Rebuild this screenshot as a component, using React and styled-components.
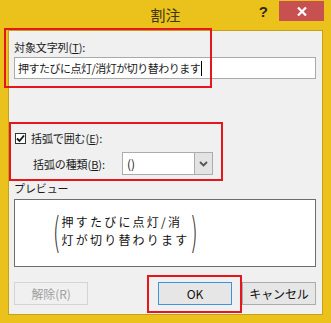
import styled, { createGlobalStyle } from "styled-components";

const GlobalStyle = createGlobalStyle`
  html, body { margin: 0; padding: 0; background: #fff; }
  body { font-family: "Noto Sans CJK JP", "Noto Sans", sans-serif; }
`;

const Frame = styled.div`
  position: relative;
  width: 331px;
  height: 323px;
  background: #ebc21b;
  display: flex;
  flex-direction: column;
  box-sizing: border-box;
`;

const TitleBar = styled.div`
  height: 30px;
  display: grid;
  grid-template-columns: 1fr auto 1fr;
`;

const Title = styled.div`
  font-size: 15px;
  line-height: 30px;
  color: #3b3415;
`;

const Controls = styled.div`
  display: flex;
  justify-content: flex-end;
  align-items: flex-start;
  padding-right: 7px;
`;

const Help = styled.span`
  font-family: "Liberation Sans", sans-serif;
  font-weight: 700;
  font-size: 15px;
  line-height: 15px;
  margin-top: 4px;
  margin-right: 11px;
  color: #2d2a1a;
`;

const Close = styled.div`
  width: 45px;
  height: 20px;
  margin-top: 1px;
  background: #c75050;
  display: flex;
  align-items: center;
  justify-content: center;
`;

const Client = styled.div`
  margin: 0 8px 8px;
  height: 285px;
  box-sizing: border-box;
  border: 1px solid #c4a118;
  background: #f0f0f0;
  padding: 8px 6px 0 5px;
  display: flex;
  flex-direction: column;
  font-size: 11px;
  letter-spacing: -0.1px;
  color: #1a1a1a;
`;

const Label = styled.div`
  line-height: 16px;
  height: 16px;
  white-space: nowrap;
  margin-top: ${(p) => p.$top || 0}px;
  u { text-decoration: underline; }
`;

const TextBox = styled.div`
  margin-top: 2px;
  height: 22px;
  box-sizing: border-box;
  border: 1px solid #a9a9a9;
  background: #fff;
  padding-left: 3px;
  line-height: 20px;
  font-size: 11px;
  letter-spacing: -0.5px;
  white-space: nowrap;
  display: flex;
  align-items: center;
`;

const Caret = styled.span`
  display: inline-block;
  width: 1px;
  height: 15px;
  background: #000;
  margin-left: 1px;
`;

const CheckRow = styled.div`
  margin-top: 51px;
  height: 16px;
  display: flex;
  align-items: center;
  gap: 5px;
  padding-left: 1px;
  line-height: 16px;
`;

const Box = styled.span`
  width: 11px;
  height: 11px;
  box-sizing: border-box;
  border: 1px solid #333;
  background: #fff;
  display: flex;
  align-items: center;
  justify-content: center;
`;

const ComboRow = styled.div`
  margin-top: 6px;
  display: flex;
  align-items: center;
  padding-left: 19px;
`;

const ComboLabel = styled.span`
  width: 89px;
  white-space: nowrap;
  line-height: 16px;
`;

const Combo = styled.div`
  width: 91px;
  height: 23px;
  box-sizing: border-box;
  border: 1px solid #acacac;
  background: #fff;
  display: flex;
`;

const ComboValue = styled.span`
  flex: 1;
  padding-left: 4px;
  line-height: 21px;
  font-size: 12px;
`;

const DropButton = styled.span`
  width: 17px;
  background: #e3e3e3;
  border-left: 1px solid #acacac;
  display: flex;
  align-items: center;
  justify-content: center;
`;

const Preview = styled.div`
  margin-top: 3px;
  height: 68px;
  box-sizing: border-box;
  border: 1px solid #6d6d6d;
  background: #fff;
  display: flex;
  align-items: center;
  padding-left: 36px;
`;

const Paren = styled.span`
  font-family: "DejaVu Sans", sans-serif;
  font-weight: 200;
  font-size: 30px;
  line-height: 30px;
  color: #222;
  transform: scaleX(0.65) scaleY(1.4);
  margin-top: 2px;
`;

const Lines = styled.div`
  display: flex;
  flex-direction: column;
  font-family: "Noto Sans CJK JP", sans-serif;
  font-size: 12px;
  line-height: 18px;
  letter-spacing: 2.2px;
  color: #111;
  margin: -4px -1px 0 -1px;
`;

const ButtonRow = styled.div`
  margin-top: 15px;
  display: flex;
  gap: 10px;
`;

const Button = styled.div`
  width: 74px;
  height: 23px;
  box-sizing: border-box;
  border: 1px solid ${(p) => (p.$primary ? "#3c94e0" : p.$disabled ? "#d4d4d4" : "#acacac")};
  background: ${(p) => (p.$disabled ? "#f0f0f0" : "#e6e6e6")};
  color: ${(p) => (p.$disabled ? "#a0a0a0" : "#111")};
  display: flex;
  align-items: center;
  justify-content: center;
  font-size: 12px;
  margin-right: ${(p) => p.$push || 0}px;
`;

const Mark = styled.div`
  position: absolute;
  left: ${(p) => p.$x}px;
  top: ${(p) => p.$y}px;
  width: ${(p) => p.$w}px;
  height: ${(p) => p.$h}px;
  box-sizing: border-box;
  border: 2px solid #e5161c;
  pointer-events: none;
`;

export default function App() {
  return (
    <>
      <GlobalStyle />
      <Frame>
        <TitleBar>
          <div />
          <Title>割注</Title>
          <Controls>
            <Help>?</Help>
            <Close>
              <svg width="10" height="9" viewBox="0 0 10 9">
                <path d="M1 0.5 L9 8.5 M9 0.5 L1 8.5" stroke="#fff" strokeWidth="2.2" />
              </svg>
            </Close>
          </Controls>
        </TitleBar>
        <Client>
          <Label>
            対象文字列(<u>T</u>):
          </Label>
          <TextBox>
            押すたびに点灯/消灯が切り替わります
            <Caret />
          </TextBox>
          <CheckRow>
            <Box>
              <svg width="9" height="9" viewBox="0 0 9 9">
                <path d="M1 4.5 L3.5 7 L8 1.5" fill="none" stroke="#111" strokeWidth="1.8" />
              </svg>
            </Box>
            <span>
              括弧で囲む(<u>E</u>):
            </span>
          </CheckRow>
          <ComboRow>
            <ComboLabel>
              括弧の種類(<u>B</u>):
            </ComboLabel>
            <Combo>
              <ComboValue>()</ComboValue>
              <DropButton>
                <svg width="9" height="6" viewBox="0 0 9 6">
                  <path d="M1 1 L4.5 4.5 L8 1" fill="none" stroke="#555" strokeWidth="1.8" />
                </svg>
              </DropButton>
            </Combo>
          </ComboRow>
          <Label $top={5}>プレビュー</Label>
          <Preview>
            <Paren>(</Paren>
            <Lines>
              <span>押すたびに点灯/消</span>
              <span>灯が切り替わります</span>
            </Lines>
            <Paren>)</Paren>
          </Preview>
          <ButtonRow>
            <Button $disabled $push={60}>解除(R)</Button>
            <Button $primary>OK</Button>
            <Button>キャンセル</Button>
          </ButtonRow>
        </Client>
        <Mark $x={4} $y={28} $w={208} $h={60} />
        <Mark $x={9} $y={122} $w={214} $h={59} />
        <Mark $x={147} $y={275} $w={95} $h={38} />
      </Frame>
    </>
  );
}
